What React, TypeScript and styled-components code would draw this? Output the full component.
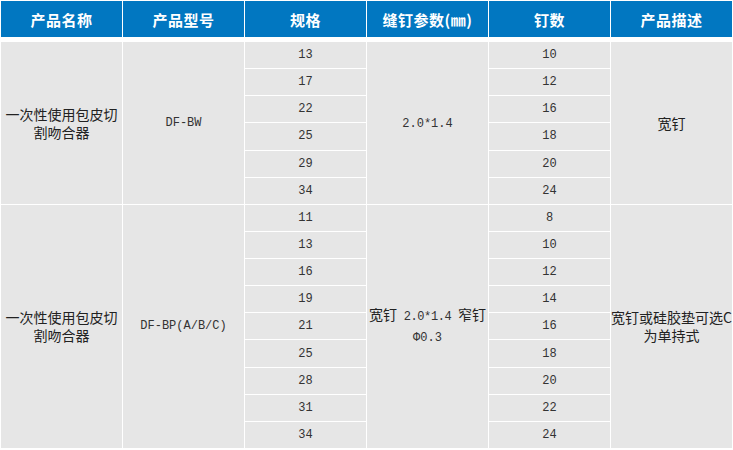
import React from "react";
import styled, { createGlobalStyle } from "styled-components";

interface Group {
  name: string;
  model: string;
  sizes: number[];
  param: React.ReactNode;
  counts: number[];
  desc: string;
}

const headers = ["产品名称", "产品型号", "规格", "缝钉参数(㎜)", "钉数", "产品描述"];

// built lazily: the styled components are declared further down
const getGroups = (): Group[] => [
  {
    name: "一次性使用包皮切割吻合器",
    model: "DF-BW",
    sizes: [13, 17, 22, 25, 29, 34],
    param: <Num>2.0*1.4</Num>,
    counts: [10, 12, 16, 18, 20, 24],
    desc: "宽钉",
  },
  {
    name: "一次性使用包皮切割吻合器",
    model: "DF-BP(A/B/C)",
    sizes: [11, 13, 16, 19, 21, 25, 28, 31, 34],
    param: (
      <>
        宽钉<Num $tight> 2.0*1.4 </Num>窄钉 <Num>Φ0.3</Num>
      </>
    ),
    counts: [8, 10, 12, 14, 16, 18, 20, 22, 24],
    desc: "宽钉或硅胶垫可选C为单持式",
  },
];

const App: React.FC = () => {
  let start = 1;
  return (
    <>
      <GlobalStyle />
      <Table>
        <HeaderRow>
          {headers.map((h) => (
            <HeadCell key={h}>{h}</HeadCell>
          ))}
        </HeaderRow>
        <Body>
          {getGroups().map((g, gi) => {
            const from = start;
            const span = g.sizes.length;
            start += span;
            return (
              <React.Fragment key={gi}>
                <Cell $col={1} $row={from} $span={span}>
                  <Text>{g.name}</Text>
                </Cell>
                <Cell $col={2} $row={from} $span={span}>
                  <Num>{g.model}</Num>
                </Cell>
                {g.sizes.map((s, i) => (
                  <Cell key={`s${i}`} $col={3} $row={from + i} $span={1}>
                    <Num>{s}</Num>
                  </Cell>
                ))}
                <Cell $col={4} $row={from} $span={span}>
                  <Text>{g.param}</Text>
                </Cell>
                {g.counts.map((c, i) => (
                  <Cell key={`c${i}`} $col={5} $row={from + i} $span={1}>
                    <Num>{c}</Num>
                  </Cell>
                ))}
                <Cell $col={6} $row={from} $span={span}>
                  <Text>{g.desc}</Text>
                </Cell>
              </React.Fragment>
            );
          })}
        </Body>
      </Table>
    </>
  );
};

export default App;

const GlobalStyle = createGlobalStyle`
  body {
    margin: 0;
    background: #ffffff;
    font-family: "Noto Sans CJK SC", sans-serif;
  }
`;

const Table = styled.div`
  width: 733px;
  padding: 1px;
  box-sizing: border-box;
`;

const HeaderRow = styled.div`
  display: grid;
  grid-template-columns: repeat(6, 1fr);
  column-gap: 1px;
  height: 36px;
`;

const HeadCell = styled.div`
  display: flex;
  align-items: center;
  justify-content: center;
  background: #0177c1;
  color: #ffffff;
  font-size: 15px;
  font-weight: 700;
  letter-spacing: 0.5px;
`;

const Body = styled.div`
  display: grid;
  grid-template-columns: repeat(6, 1fr);
  grid-template-rows: repeat(15, 1fr);
  gap: 1px;
  height: 406px;
  margin-top: 5px;
`;

const Cell = styled.div<{ $col: number; $row: number; $span: number }>`
  grid-column: ${(p) => p.$col};
  grid-row: ${(p) => p.$row} / span ${(p) => p.$span};
  display: flex;
  align-items: center;
  justify-content: center;
  background: #e6e6e6;
  color: #222222;
  overflow: visible;
`;

const Text = styled.div`
  font-size: 14px;
  line-height: 18px;
  text-align: center;
  white-space: normal;
`;

const Num = styled.span<{ $tight?: boolean }>`
  font-family: "Liberation Mono", monospace;
  font-size: 12px;
  letter-spacing: ${(p) => (p.$tight ? "-0.4px" : "0")};
  color: #333333;
  white-space: pre-wrap;
`;
